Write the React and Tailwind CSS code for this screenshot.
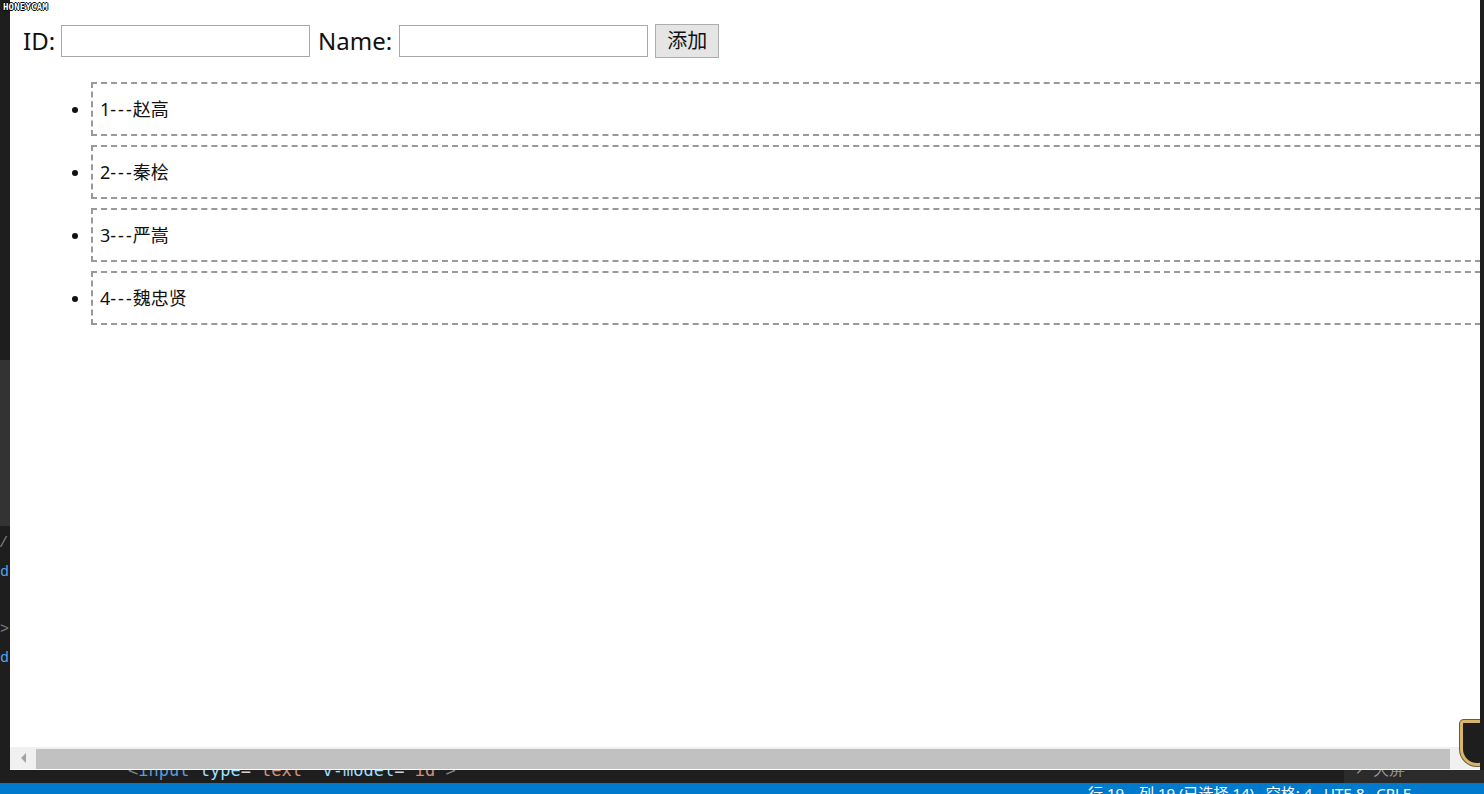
import { useState } from 'react'

const font = { fontFamily: '"Noto Sans", "Noto Sans CJK SC", sans-serif' }

export default function App() {
  const [id, setId] = useState('')
  const [name, setName] = useState('')
  const [list, setList] = useState([
    { id: 1, name: '赵高' },
    { id: 2, name: '秦桧' },
    { id: 3, name: '严嵩' },
    { id: 4, name: '魏忠贤' },
  ])

  const add = () => {
    if (!id || !name) return
    setList(current => [...current, { id, name }])
    setId('')
    setName('')
  }

  return (
    <div className="relative h-[794px] w-[1484px] overflow-hidden flex flex-col bg-[#1e1e1e]" style={font}>
      {/* recorder watermark */}
      <div className="absolute z-20 left-[3px] top-[3px] text-[9px] font-bold leading-none tracking-[0.2px] text-white font-['DejaVu_Sans_Mono',monospace] [text-shadow:1px_0_0_#000,-1px_0_0_#000,0_1px_0_#000,0_-1px_0_#000]">
        HONEYCAM
      </div>

      <div className="flex h-[770px]">
        {/* editor gutter peeking out on the left */}
        <div className="w-[10px] flex-shrink-0 flex flex-col bg-[#1e1e1e] overflow-hidden font-['Liberation_Mono',monospace] text-[15px] leading-none">
          <div className="h-[360px]" />
          <div className="h-[166px] bg-[#333333]" />
          <div className="mt-[10px] text-[#808080] -ml-[1px]">/</div>
          <div className="mt-[14px] text-[#4fa3ef]">d</div>
          <div className="mt-[42px] text-[#808080]">&gt;</div>
          <div className="mt-[14px] text-[#4fa3ef]">d</div>
        </div>

        {/* browser window */}
        <div className="relative flex-1 flex flex-col bg-white overflow-hidden">
          <div className="flex-1 overflow-hidden">
            <div className="flex items-center h-[34px] mt-[24px] pl-[13px] text-[24px] text-[#111] leading-none">
              <span>ID:</span>
              <input
                value={id}
                onChange={e => setId(e.target.value)}
                className="ml-[6px] w-[249px] h-[32px] border border-[#a9a9a9] px-1 text-[18px] outline-none"
                type="text"
              />
              <span className="ml-[8px]">Name:</span>
              <input
                value={name}
                onChange={e => setName(e.target.value)}
                className="ml-[7px] w-[249px] h-[32px] border border-[#a9a9a9] px-1 text-[18px] outline-none"
                type="text"
              />
              <button
                onClick={add}
                className="ml-[7px] w-[64px] h-[34px] border border-[#adadad] bg-[#e5e5e5] text-[20px] text-[#111] leading-none"
              >
                添加
              </button>
            </div>

            <ul className="list-disc mt-[24px] pl-[81px] text-[18px] text-[#111]">
              {list.map(item => (
                <li key={item.id} className="mb-[9px] marker:text-[#111]">
                  <div className="w-[1420px] h-[54px] border-2 border-dashed border-[#999999] flex items-center pl-[7px]">
                    {item.id}<span className="tracking-[2px] mr-[-1px]">---</span>{item.name}
                  </div>
                </li>
              ))}
            </ul>
          </div>

          {/* horizontal scrollbar */}
          <div className="h-[23px] flex-shrink-0 flex bg-[#f0f0f0] border-b border-white">
            <div className="w-[26px] flex items-center justify-center">
              <div className="w-0 h-0 border-y-[5px] border-y-transparent border-r-[5px] border-r-[#a3a3a3]" />
            </div>
            <div className="w-[1414px] h-[20px] mt-[2px] bg-[#c1c1c1]" />
          </div>

          {/* floating shield overlay bottom-right */}
          <div className="absolute right-[-14px] bottom-[4px] w-[34px] h-[46px] rounded-b-[18px] rounded-t-[4px] border-[3px] border-[#d9b46c] bg-[#1e1e1e] shadow-[0_0_0_1px_#6b5a3a]" />
        </div>

        <div className="w-[4px] flex-shrink-0 bg-[#1e1e1e]" />
      </div>

      {/* editor line under the browser */}
      <div className="h-[13px] flex-shrink-0 flex overflow-hidden bg-[#1e1e1e] font-['DejaVu_Sans_Mono',monospace] text-[17px] leading-none">
        <div className="w-[128px] flex-shrink-0" />
        <div className="-mt-[8px] whitespace-nowrap">
          <span className="text-[#808080]">&lt;</span>
          <span className="text-[#569cd6]">input</span>
          <span className="text-[#9cdcfe]"> type</span>
          <span className="text-[#d4d4d4]">=</span>
          <span className="text-[#ce9178]">"text"</span>
          <span className="text-[#9cdcfe]"> v-model</span>
          <span className="text-[#d4d4d4]">=</span>
          <span className="text-[#ce9178]">"id"</span>
          <span className="text-[#808080]">&gt;</span>
        </div>
        <div className="flex-1" />
        <div className="w-[140px] flex-shrink-0 bg-[#2b2b2b] text-[#9a9a9a] text-[16px] pl-[10px] overflow-hidden">
          <span className="relative -top-[8px]">› 大屏</span>
        </div>
      </div>

      {/* status bar */}
      <div className="h-[11px] flex-shrink-0 bg-[#007acc] overflow-hidden flex text-white text-[15px] leading-none">
        <div className="w-[1088px] flex-shrink-0" />
        <div className="whitespace-nowrap pt-[3px]">
          行 19，列 19 (已选择 14)&nbsp;&nbsp;&nbsp;空格: 4&nbsp;&nbsp;&nbsp;UTF-8&nbsp;&nbsp;&nbsp;CRLF
        </div>
      </div>
    </div>
  )
}
